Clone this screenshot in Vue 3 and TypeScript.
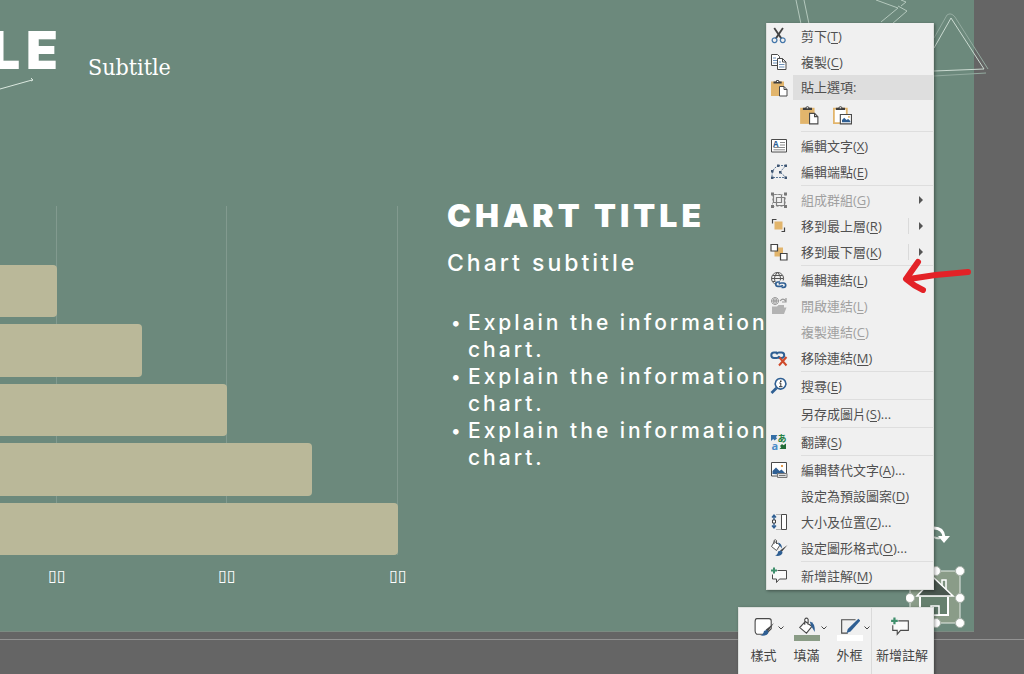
<script setup lang="ts">
interface Shape { d: string; fill?: string; stroke?: string; w?: number; dash?: string }
interface Glyph { x: number; y: number; size: number; fill: string; t: string }
interface Icon { shapes: Shape[]; glyphs?: Glyph[] }
interface Item { label: string; key: string; tail?: string; icon?: string; disabled?: boolean; sub?: boolean; split?: boolean }

const ink = '#4a4a4a'
const blue = '#2f5f93'
const tan = '#e2b56c'
const gray = '#999999'
const green = '#3f8f6c'

const clip: Shape[] = [
  { d: 'M1 2.5h13v14.5H1z', fill: tan },
  { d: 'M3.500 4.500v-2h2.200a2 2 0 0 1 3.800 0h2.200v2z', fill: '#3f3f3f' },
  { d: 'M6.900 2h1.400v1H6.900z', fill: '#ffffff' },
]
const link = (x: number, y: number): Shape[] => [
  { d: `M${x + 4} ${y}h-2a2.200 2.200 0 0 0 0 4.400h2.500a2.200 2.200 0 0 0 2-1.400`, stroke: blue, w: 1.7 },
  { d: `M${x + 5.5} ${y + 5.4}h2a2.200 2.200 0 0 0 0-4.400h-2.500a2.200 2.200 0 0 0-2 1.400`, stroke: blue, w: 1.7 },
]
const comment: Shape[] = [
  { d: 'M7.500 3.500H16.500V12H9.500L6.500 15.500V12H2.500V7.500', fill: '#fafafa', stroke: ink },
  { d: 'M4 .5v6M1 3.500h6', stroke: green, w: 2 },
]

const icons: Record<string, Icon> = {
  cut: { shapes: [
    { d: 'M3.500 1.500L5 .5 12.200 11l-1.500 1.200z', fill: '#444' },
    { d: 'M13.700 1.500L12.200 .5 5 11l1.500 1.200z', fill: '#444' },
    { d: 'M4.500 10.800a2.400 2.400 0 1 0 .1 0zM12.700 10.800a2.400 2.400 0 1 0 .1 0z', stroke: '#4477aa', w: 1.3 },
  ] },
  copy: { shapes: [
    { d: 'M1.500 1.500h6l2 2V12.500h-8z', fill: '#fff', stroke: ink },
    { d: 'M3 5h3M3 7.500h4M3 10h4', stroke: '#6d91b8' },
    { d: 'M7.500 5.500h5l3.500 3.500v7.500H7.500z', fill: '#fff', stroke: ink },
    { d: 'M12.500 5.500V9H16', stroke: ink },
    { d: 'M9 9h2M9 11.500h5.500M9 14h5.500', stroke: '#6d91b8' },
  ] },
  paste: { shapes: [
    ...clip,
    { d: 'M9.500 7.500h4.500l3 3v6.500H9.500z', fill: '#fff', stroke: ink },
    { d: 'M14 7.500v3h3', stroke: ink },
  ] },
  pastePicture: { shapes: [
    { d: 'M1.700 3.200h11.600v13.100H1.700z', fill: '#fff', stroke: tan, w: 1.6 },
    clip[1], clip[2],
    { d: 'M7.500 8.500h10v8.500h-10z', fill: '#fff', stroke: ink },
    { d: 'M9 15.500v-2l2-2 2 2 1.500-1 2 2v1z', fill: blue },
    { d: 'M14.500 10h1.500v1.500h-1.500z', fill: tan },
  ] },
  text: { shapes: [
    { d: 'M1.500 2.500h15v12.500h-15z', fill: '#fff', stroke: ink },
    { d: 'M10 5.500h5M10 8h5M3.500 10.500h11.500M3.500 12.800h11.500', stroke: '#8a8a8a' },
  ], glyphs: [{ x: 3, y: 9.5, size: 8, fill: blue, t: 'A' }] },
  points: { shapes: [
    { d: 'M9 2.800C4 4 2 8 2 13.500M8 2.500h8L10 9l6 5.500H2', stroke: '#5b7899', dash: '2 1' },
    { d: 'M7 1.500h2.500V4H7zM14.500 1.500H17V4h-2.500zM1 7h2.500v2.500H1zM9 8h2.500v2.500H9zM1 13.500h2.500V16H1zM14.500 13.500H17V16h-2.500z', fill: '#405672' },
  ] },
  group: { shapes: [
    { d: 'M3.500 3.500h8v8h-8zM6.500 6.500h8v8h-8z', stroke: '#808080', w: 1.2 },
    { d: 'M2.500 3.500h13v12h-13z', stroke: '#aaa', dash: '2 2' },
    { d: 'M1 1.500h3v3H1zM14 1.500h3v3h-3zM1 14h3v3H1zM14 14h3v3h-3z', fill: '#777' },
  ] },
  front: { shapes: [
    { d: 'M2.500 6.500v-4h4M11.500 14.500h3v-4', stroke: '#444', w: 1.2 },
    { d: 'M4.500 4.500h8v8h-8z', fill: tan },
  ] },
  back: { shapes: [
    { d: 'M4.500 4.500h8.500v9H4.500z', fill: tan },
    { d: 'M1 1.500h6.500V8H1zM10.500 10.500H17V17h-6.500z', fill: '#fff', stroke: '#444', w: 1.2 },
  ] },
  link: { shapes: [
    { d: 'M7.500 1.500a6 6 0 1 0 .1 0zM7.500 1.500c-4 4-4 8 0 12M7.500 1.500c4 4 4 8 0 12M1.500 7.500h12M2.500 4.500h10M2.500 10.500h10', stroke: '#555' },
    { d: 'M5.500 9.500H18V18H5.500z', fill: '#f0f0f0' },
    ...link(6, 11),
  ] },
  open: { shapes: [
    { d: 'M5 .5a3.500 3.500 0 1 0 .1 0zM5 .5v7M1.500 4h7M3 1.500c1 2 1 3.500 0 5M7 1.500c-1 2-1 3.500 0 5', stroke: gray },
    { d: 'M10 4c2-2.500 4-2.500 5.500 0M16 1v4h-4', stroke: gray, w: 1.2 },
    { d: 'M2 9.500h5l1.500-1.500H14v2.500h2.500L14 17H2z', fill: '#b3b3b3' },
  ] },
  unlink: { shapes: [
    { d: 'M7 3.500H4a2.700 2.700 0 0 0 0 5.400h3a2.700 2.700 0 0 0 2.500-1.700M9 9h2.500a2.700 2.700 0 0 0 0-5.400H9a2.700 2.700 0 0 0-2.500 1.700', stroke: blue, w: 2 },
    { d: 'M9.500 8.500l7 8M16.500 8l-7.500 8.500', stroke: '#cf4a2b', w: 2 },
  ] },
  search: { shapes: [
    { d: 'M10.500 1.500a5.300 5.300 0 1 0 .1 0z', fill: '#fff', stroke: blue, w: 1.6 },
    { d: 'M6.500 11L1.500 16', stroke: blue, w: 2.6 },
    { d: 'M9.300 6h1.500v3.500M9 9.700h3.500', stroke: '#333' },
    { d: 'M10 3.500h1.500V5H10z', fill: '#333' },
  ] },
  translate: { shapes: [
    { d: 'M1 8V2h6.500L6 4l1 1.500L4.500 7.500 3.200 6z', fill: '#356fa6' },
    { d: 'M16 10.500V16H9.500l1.700-1.700-1.200-1.300 2-2 1.500 1.300z', fill: '#226c37' },
  ], glyphs: [
    { x: 7.5, y: 9, size: 9, fill: '#248044', t: 'あ' },
    { x: 1.5, y: 16.5, size: 11, fill: '#4a8cc8', t: 'a' },
  ] },
  alt: { shapes: [
    { d: 'M1.500 1.500h15v13.500h-15z', fill: '#fff', stroke: ink },
    { d: 'M2.500 13V10L6 6.500 9.500 10l2-1.500 4 4V14z', fill: blue },
    { d: 'M11 4h2v2h-2z', fill: '#e39a4d' },
    { d: 'M7.500 12.500H17v4H7.500z', fill: '#ddd', stroke: '#777' },
    { d: 'M9 14.500h6.500', stroke: '#777' },
  ] },
  size: { shapes: [
    { d: 'M4 2.500v12M2 4.500L4 2l2 2.500M2 12.500L4 15l2-2.500', stroke: blue, w: 1.4 },
    { d: 'M2.500 7h3v3h-3z', fill: '#fff', stroke: '#444' },
    { d: 'M6.500 1.500h5M6.500 16.500h5', stroke: '#777', dash: '1 1' },
    { d: 'M11.500 1.500h5v15h-5z', fill: '#fff', stroke: ink },
  ] },
  format: { shapes: [
    { d: 'M4.500 2.500L10 6l-3.500 5.500L1.500 7.500zM4 5V1.500q1.500-1.500 2.500 0V5', fill: '#fff', stroke: '#555' },
    { d: 'M8 3.500q4 1 4 6l-2.500-3z', fill: blue },
    { d: 'M17.500 6L12 12.500l-2-1z', fill: '#444' },
    { d: 'M11 11.500q3 2 0 4.500-3 1.500-6 .5 3-1 3-4z', fill: blue },
  ] },
  comment: { shapes: comment },
  style: { shapes: [
    { d: 'M2.500 1.500h11q2 0 2 2v7l-5 5h-8q-1.500-1-1.500-3v-8q0-3 1.500-3z', fill: '#fff', stroke: ink },
    { d: 'M18 5.500L12.500 13l-2-1.500z', fill: '#444' },
    { d: 'M11.500 11.500q3 2 0 4.500-3 1.500-6 .5 3-.5 3.500-4z', fill: blue },
  ] },
  fill: { shapes: [
    { d: 'M7.500 4L13.500 8.500l-5 6L2.500 9.500zM7 7v-5q1.500-2 3 0v5', fill: '#fff', stroke: ink },
    { d: 'M11.500 4q5 1 4.500 9.500l-3-5z', fill: blue },
  ] },
  outline: { shapes: [
    { d: 'M14 2.500H1.500V14.500H7', stroke: ink },
    { d: 'M16.500 1.500l1.800 1.800L9.500 13l-3.500 1.500 1-3.800z', fill: blue },
  ] },
}

const topItems: Item[] = [
  { label: '剪下', key: 'T', icon: 'cut' },
  { label: '複製', key: 'C', icon: 'copy' },
]
const groups: Item[][] = [
  [{ label: '編輯文字', key: 'X', icon: 'text' }, { label: '編輯端點', key: 'E', icon: 'points' }],
  [
    { label: '組成群組', key: 'G', icon: 'group', disabled: true, sub: true },
    { label: '移到最上層', key: 'R', icon: 'front', sub: true, split: true },
    { label: '移到最下層', key: 'K', icon: 'back', sub: true, split: true },
  ],
  [
    { label: '編輯連結', key: 'L', icon: 'link' },
    { label: '開啟連結', key: 'L', icon: 'open', disabled: true },
    { label: '複製連結', key: 'C', disabled: true },
    { label: '移除連結', key: 'M', icon: 'unlink' },
  ],
  [{ label: '搜尋', key: 'E', icon: 'search' }],
  [{ label: '另存成圖片', key: 'S', tail: '...' }],
  [{ label: '翻譯', key: 'S', icon: 'translate' }],
  [
    { label: '編輯替代文字', key: 'A', tail: '...', icon: 'alt' },
    { label: '設定為預設圖案', key: 'D' },
    { label: '大小及位置', key: 'Z', tail: '...', icon: 'size' },
    { label: '設定圖形格式', key: 'O', tail: '...', icon: 'format' },
  ],
  [{ label: '新增註解', key: 'M', icon: 'comment' }],
]
const menu: Item[][] = [topItems, ...groups]

const tools = [
  { label: '樣式', icon: 'style', bar: '' },
  { label: '填滿', icon: 'fill', bar: 'sage' },
  { label: '外框', icon: 'outline', bar: 'white' },
]
const bars = [14.3, 35.7, 57.1, 78.5, 100]
const ticks = ['▯▯', '▯▯', '▯▯']
const points = [1, 2, 3]
const handles = [[30, 47], [54, 47], [4, 74], [54, 74], [30, 99], [54, 99]]
</script>

<template>
  <main class="editor">
    <section class="slide">
      <header class="heading">
        <h1>TITLE</h1>
        <p>Subtitle</p>
      </header>
      <div class="content">
        <figure class="chart">
          <div class="plot">
            <div class="grid"><i v-for="(t, i) in ticks" :key="i"></i></div>
            <div class="bars"><div v-for="b in bars" :key="b" class="bar" :style="{ width: b + '%' }"></div></div>
          </div>
          <figcaption class="ticks"><span v-for="(t, i) in ticks" :key="i"><b>{{ t }}</b></span></figcaption>
        </figure>
        <article class="copy">
          <h2>CHART TITLE</h2>
          <h3>Chart subtitle</h3>
          <ul><li v-for="p in points" :key="p">Explain the information<br>chart.</li></ul>
        </article>
      </div>
      <svg class="stroke" width="40" height="20" viewBox="0 0 40 20"><path d="M0 14L32 5M31 3l2 2-2 1" fill="none" stroke="#dbe8df" /></svg>
    </section>
    <div class="guide"></div>

    <svg class="doodle" width="244" height="90" viewBox="0 0 244 90" fill="none" stroke="#b4c8bd">
      <path d="M16 0l5 24M24 0l5 24M121 0l5 2-5 4M96 0l22 8-17 14M118 6l9 5-15 13" />
      <path d="M154 48L171 18 204 69 154 71" stroke="#cbdad1" />
      <path d="M154 38L167 15q4-3 8 2L208 69M154 76L206 73" stroke="#94aba0" />
    </svg>

    <svg class="selection" width="60" height="110" viewBox="0 0 60 110">
      <path d="M28 4q9 0 10 9" fill="none" stroke="#fff" stroke-width="3" />
      <path d="M28 13q3 2 6 1" fill="none" stroke="#d5ddd7" stroke-width="2" />
      <path d="M32 12h12l-6 7z" fill="#fff" />
      <rect x="4" y="47" width="50" height="52" fill="#8a9c88" stroke="#e5ebe5" />
      <path d="M36 66V56h4v15" fill="#7c917e" stroke="#fff" stroke-width="1.500" />
      <path d="M14 73v18h28V73" fill="#66806e" stroke="#fff" stroke-width="2" />
      <path d="M25 91V82h8v9z" fill="#60796a" stroke="#fff" stroke-width="1.500" />
      <path d="M28 54L47 72H11z" fill="#4a574f" stroke="#fff" stroke-width="1.500" />
      <circle v-for="([x, y], i) in handles" :key="i" :cx="x" :cy="y" r="4.500" fill="#fff" stroke="#a9b3aa" />
    </svg>

    <nav class="menu" aria-label="操作">
      <template v-for="(group, g) in menu" :key="g">
        <ul class="group">
          <li v-for="item in group" :key="item.label">
            <button type="button" :disabled="item.disabled">
              <svg class="icon" viewBox="0 0 18 18" fill="none">
                <template v-if="item.icon">
                  <path v-for="(s, i) in icons[item.icon].shapes" :key="i" :d="s.d" :fill="s.fill || 'none'" :stroke="s.stroke" :stroke-width="s.w || 1" :stroke-dasharray="s.dash" />
                  <text v-for="t in icons[item.icon].glyphs" :key="t.t" :x="t.x" :y="t.y" :font-size="t.size" :fill="t.fill" font-weight="700">{{ t.t }}</text>
                </template>
              </svg>
              <span class="label">{{ item.label }}(<u>{{ item.key }}</u>){{ item.tail }}</span>
              <span v-if="item.sub" class="more" :class="{ split: item.split }"></span>
            </button>
          </li>
        </ul>
        <div v-if="g === 0" class="paste">
          <div class="pasteHead">
            <svg class="icon" viewBox="0 0 18 18" fill="none"><path v-for="(s, i) in icons.paste.shapes" :key="i" :d="s.d" :fill="s.fill || 'none'" :stroke="s.stroke" :stroke-width="s.w || 1" /></svg>
            <strong>貼上選項:</strong>
          </div>
          <div class="pasteOptions">
            <button v-for="n in ['paste', 'pastePicture']" :key="n" type="button" :aria-label="n">
              <svg viewBox="0 0 18 18" fill="none"><path v-for="(s, i) in icons[n].shapes" :key="i" :d="s.d" :fill="s.fill || 'none'" :stroke="s.stroke" :stroke-width="s.w || 1" /></svg>
            </button>
          </div>
        </div>
      </template>
    </nav>

    <div class="mini" role="toolbar">
      <button v-for="t in tools" :key="t.label" type="button">
        <span class="face">
          <svg viewBox="0 0 18 18" fill="none"><path v-for="(s, i) in icons[t.icon].shapes" :key="i" :d="s.d" :fill="s.fill || 'none'" :stroke="s.stroke" :stroke-width="s.w || 1" /></svg>
          <svg class="chev" viewBox="0 0 6 4" fill="none"><path d="M.5.5L3 3 5.500.5" stroke="#444" /></svg>
        </span>
        <span class="swatch" :class="t.bar"></span>
        <span>{{ t.label }}</span>
      </button>
      <button type="button" class="wide">
        <span class="face"><svg viewBox="0 0 18 18" fill="none"><path v-for="(s, i) in icons.comment.shapes" :key="i" :d="s.d" :fill="s.fill || 'none'" :stroke="s.stroke" :stroke-width="s.w || 1" /></svg></span>
        <span class="swatch"></span>
        <span>新增註解</span>
      </button>
    </div>

    <svg class="arrow" width="72" height="40" viewBox="0 0 72 40" fill="none" stroke="#e32227" stroke-linecap="round" stroke-linejoin="round">
      <path d="M18 5Q13 12 6 22Q14 29 23 33" stroke-width="6" />
      <path d="M9 22Q38 17 68 15" stroke-width="6" />
    </svg>
  </main>
</template>

<style>
body { margin: 0; background: #656565; }
</style>

<style scoped>
* { box-sizing: border-box; }
h1, h2, h3, p, ul, figure { margin: 0; padding: 0; }
ul { list-style: none; }
button { border: 0; padding: 0; background: none; font: inherit; color: inherit; text-align: left; }
svg { display: block; }
.editor { position: relative; min-height: 100vh; overflow: hidden; background: #656565; font-family: "Open Sans", "Noto Sans CJK TC", sans-serif; }
.slide { position: relative; margin-right: 50px; padding-bottom: 45px; background: #6c897c; border-bottom: 1px solid #7c8b82; color: #fff; font-family: Inter, "Open Sans", sans-serif; overflow: hidden; }
.heading { display: flex; align-items: center; gap: 24px; height: 100px; }
h1 { display: flex; justify-content: flex-end; width: 64px; overflow: hidden; padding-top: 2px; font-size: 52px; font-weight: 900; line-height: 60px; letter-spacing: 6px; }
.heading p { padding-top: 34px; font: 23px/32px "DejaVu Serif Condensed", "DejaVu Serif", serif; }
.content { display: grid; grid-template-columns: 398fr 576fr; padding-top: 106px; }
.plot { display: grid; height: 349px; }
.grid, .bars { grid-area: 1 / 1; }
.grid, .ticks { display: grid; grid-template-columns: 57fr 170fr 171fr; }
.grid i { border-right: 1px solid #829a8f; }
.bars { display: flex; flex-direction: column; gap: 7px; padding-top: 59px; }
.bar { flex: 1; border-radius: 0 4px 4px 0; background: #bab899; }
.ticks { padding-top: 11px; }
.ticks span { display: flex; justify-content: flex-end; }
.ticks b { transform: translateX(50%); font: 16px/20px "DejaVu Sans", sans-serif; }
.chart { z-index: 1; }
.copy { padding-left: 49px; white-space: nowrap; }
h2 { margin-top: -8px; font-size: 32px; font-weight: 900; line-height: 36px; letter-spacing: 4px; }
h3 { margin-top: 15px; font-size: 23px; font-weight: 500; line-height: 28px; letter-spacing: 3px; }
.copy ul { margin-top: 32px; font-size: 21px; font-weight: 500; line-height: 27px; letter-spacing: 3px; }
.copy li { display: block; padding-left: 21px; }
.copy li::before { content: "•"; float: left; width: 17px; margin-left: -17px; font-size: 18px; letter-spacing: 0; }
.stroke { position: absolute; left: 0; top: 75px; }
.guide { height: 1px; margin-top: 7px; background: #929292; }
.doodle { position: absolute; right: 0; top: 0; }
.selection { position: absolute; right: 58px; top: 524px; }
.menu { position: absolute; top: 23px; right: 90px; width: 168px; border: 1px solid #dcdfdc; border-top: 0; background: #f0f0f0; box-shadow: 1px 1px 3px rgba(0, 0, 0, .4); color: #505050; font-size: 13px; line-height: 26px; }
.group + .group, .paste + .group { padding-top: 2px; background: linear-gradient(#dedede, #dedede) 34px 0 / 132px 1px no-repeat; }
.group button { display: flex; align-items: center; width: 100%; height: 26px; padding-left: 3px; white-space: nowrap; }
.group button:disabled { color: #a0a0a0; }
.icon { width: 18px; height: 18px; flex: none; margin-right: 13px; }
.label { flex: 1; }
.label u { text-underline-offset: 2px; }
.more { display: flex; align-items: center; justify-content: center; width: 25px; height: 16px; }
.more.split { border-left: 1px solid #dadada; }
.more::after { content: ""; border: 4px solid transparent; border-left-color: #555; border-right: 0; }
.pasteHead { display: flex; align-items: center; height: 25px; padding-left: 3px; }
.pasteHead .icon { margin-right: 5px; }
.pasteHead strong { flex: 1; height: 25px; padding-left: 8px; background: #dedede; line-height: 25px; font-weight: 400; }
.pasteOptions { display: flex; gap: 13px; padding: 5px 0 7px 32px; height: 31px; }
.pasteOptions svg { width: 20px; height: 20px; }
.mini { position: absolute; top: 607px; right: 90px; display: flex; width: 196px; height: 90px; padding-left: 3px; border: 1px solid #dcdfdc; background: #f0f0f0; box-shadow: 1px 1px 3px rgba(0, 0, 0, .4); color: #444; font-size: 13px; line-height: 20px; }
.mini button { display: flex; flex-direction: column; align-items: center; width: 43px; padding-top: 9px; }
.mini .wide { width: 61px; border-left: 1px solid #dadada; }
.wide .face { margin-right: 5px; }
.face { display: flex; align-items: center; justify-content: center; height: 20px; }
.face svg { width: 20px; height: 20px; flex: none; }
.face .chev { width: 6px; height: 4px; margin: 2px -6px 0 4px; }
.face svg:first-child:not(:last-child) { margin-left: 4px; }
.swatch { width: 26px; height: 6px; margin: -2px 0 4px; }
.sage { background: #8a9c86; }
.white { background: #fff; }
.arrow { position: absolute; right: 52px; top: 257px; }
</style>
